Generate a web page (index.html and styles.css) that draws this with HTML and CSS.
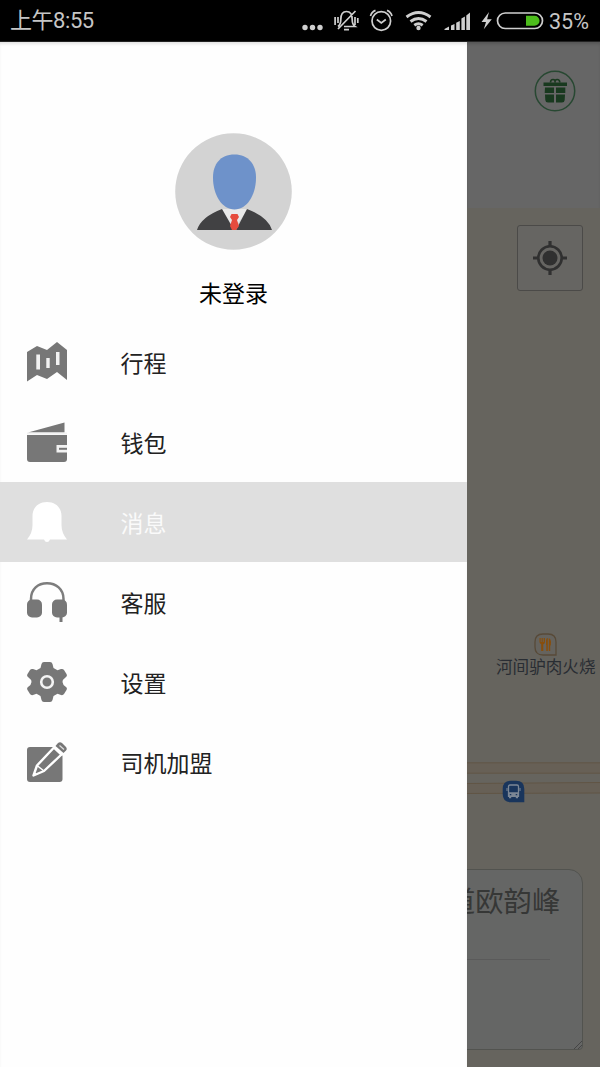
FILE: index.html
```html
<!DOCTYPE html>
<html lang="zh-CN">
<head>
<meta charset="utf-8">
<title>未登录</title>
<link rel="stylesheet" href="styles.css">
</head>
<body>
<div class="phone">
  <header class="status">
    <span class="clock">上午8:55</span>
    <svg class="status-icons" width="248" height="42" viewBox="296 0 248 42" fill="none" stroke="#cfcfcf" stroke-width="1.7">
      <g fill="#cfcfcf" stroke="none"><circle cx="305" cy="27.500" r="2.700"/><circle cx="312.500" cy="27.500" r="2.700"/><circle cx="320" cy="27.500" r="2.700"/></g>
      <path d="M338 26.500q2.800-2 2.800-7c0-5 1.700-8 5.700-8s5.700 3 5.700 8q0 5 2.800 7h-11M344 29.700h5M355.500 11L338 29M335.100 17v8M338 17v6M355 17v8M357.800 18v5"/>
      <circle cx="381.300" cy="21" r="9.300"/>
      <path d="M376.800 19.500l4.500 3.500 4.500-3.500M370.500 16q1-4 5-5.600M387 10.400q4 1.600 5 5.600"/>
      <g stroke-width="2.900"><path d="M406.500 17q12-9 24 0M410.500 21.500q8-6 16 0M414.300 25.300q4.200-3 8.400 0"/></g>
      <circle cx="418.500" cy="28" r="2.200" fill="#cfcfcf" stroke="none"/>
      <g fill="#cfcfcf" stroke="none"><path d="M444.500 30v-1l4.500-2.500V30zM451 25.500l3.500-1.500v6H451zM456.200 22.800l3.600-1.800v9h-3.600zM461.400 18.500l3.500-2v13.500h-3.500zM466.300 15.500l3.700-3v17.500h-3.700z"/><path d="M489 12l-7.500 10h4.500l-2.200 7.300 8-10h-4.700z"/></g>
      <rect x="497.500" y="13" width="45" height="15.500" rx="7.700"/>
      <path d="M526 15.700h8.500a5 5 0 0 1 0 10.100H526z" fill="#4dbd1c" stroke="none"/>
    </svg>
    <span class="percent">35%</span>
  </header>
  <div class="screen">
    <main class="drawer">
      <section class="profile">
        <svg class="avatar" width="117" height="117" viewBox="0 0 117 117">
          <circle cx="58.500" cy="58.500" r="58.300" fill="#d3d3d3"/>
          <path d="M47 76l12 20 14-20z" fill="#e9e9e9"/>
          <path d="M22 97q4-13 25-21l12 21zM97 97q-4-13-25-21L61 97z" fill="#414143"/>
          <path d="M56.500 81h6l1.500 3-2 3 2 6-3 4h-4l-2-4 2-6-2-3z" fill="#e64b3d"/>
          <path d="M59.500 21.500c14 0 21.500 10 21.500 23C81 62 72 76.500 59.500 76.500S38 62 38 44.500c0-13 7-23 21.500-23z" fill="#6e92ca"/>
        </svg>
        <h1 class="name">未登录</h1>
      </section>
      <nav class="menu">
        <a class="item"><svg class="icon" viewBox="0 0 40 40"><path d="M0 10L10 4l10 4L30 0l10 8v30l-10-8-10 7-10-4L0 39.500z"/><path class="cut" d="M9.300 12.500h3.700v15H9.300zM19.300 16h3.400v10h-3.400zM29 10h3.500v13H29z"/></svg><span>行程</span></a>
        <a class="item"><svg class="icon" viewBox="0 0 40 40"><path d="M1 10.500L37.500.5V10.500z"/><path d="M0 13h40v24q0 3-3 3H3q-3 0-3-3z"/><path class="cut" d="M29.500 23H40v7.500H29.500zM0 10.600h40v2H0z"/><path d="M32 25.800h8v2h-8z"/></svg><span>钱包</span></a>
        <a class="item active"><svg class="icon" viewBox="0 0 40 40"><path d="M20 0c9 0 14.500 6 14.500 14v9q0 8 5.500 14.500H23q-1 2.500-3 2.500t-3-2.500H0Q5.500 31 5.500 23v-9C5.500 6 11 0 20 0z"/></svg><span>消息</span></a>
        <a class="item"><svg class="icon" viewBox="0 0 40 40"><path d="M4 20v-3C4 7 11 1.300 20 1.300S36.500 7 36.500 17v3" fill="none" stroke="#7d7d7d" stroke-width="2.500"/><rect y="17.500" width="15" height="18" rx="5"/><rect x="25" y="17.500" width="15" height="18" rx="5"/><path d="M32.500 34h3v6h-3z"/></svg><span>客服</span></a>
        <a class="item"><svg class="icon" viewBox="0 0 40 40"><path d="M17 0h6q2 0 2.500 2l1 4 4 2.300 3.500-1.300q2-.5 3 1l2.500 4q1 2-.5 3Q35.500 17.500 35.500 20t3.500 5q1.500 1 .5 3L37 32q-1 1.500-3 1l-3.500-1.300-4 2.300-1 4q-.5 2-2.500 2h-6q-2 0-2.500-2l-1-4-4-2.300L6 33q-2 .5-3-1L.5 28q-1-2 .5-3 3.500-2.500 3.500-5T1 15q-1.500-1-.5-3L3 8q1-1.500 3-1l3.500 1.300 4-2.300 1-4Q15 0 17 0z"/><circle cx="20" cy="20" r="5.800" fill="none" stroke="#f4f4f4" stroke-width="2.600"/></svg><span>设置</span></a>
        <a class="item"><svg class="icon" viewBox="0 0 40 40"><rect y="5" width="35.500" height="35" rx="3"/><path d="M27 5.500L30 2l9 8-4 4" fill="#fff"/><path d="M6.500 33.500L10 23.500 27 5.500l7.500 7L17 29z" stroke="#fff" stroke-width="2.400" stroke-linejoin="round"/><path d="M10 23.500l7 5.500" stroke="#fff" stroke-width="1.500"/><path d="M28.500 4L31 1q2-1.500 4 0l4 4q1.500 2 0 3.500L36.500 11z"/><path d="M32.500 3.500l4.500 4" stroke="#ddd" stroke-width="1.300"/></svg><span>司机加盟</span></a>
      </nav>
    </main>
    <aside class="behind">
      <div class="topbar">
        <svg class="gift" width="42" height="42" viewBox="0 0 42 42">
          <circle cx="21" cy="21" r="19.700" fill="none" stroke="#284832" stroke-width="1.500"/>
          <g fill="#19391f"><path d="M9.500 12.500h23.500v3.500H9.500zM11 17.500h9v5.500h-9.300zM22 17.500h9.300v5.500H22zM11 24.500h9v8h-6q-2.500 0-2.700-2.500zM22 24.500h9l-.3 5.500q-.2 2.500-2.700 2.500h-6z"/></g>
          <path d="M16.500 12.500q0-3 2.500-3t2 3q-.3-3 2.200-3t2.600 3" fill="none" stroke="#19391f" stroke-width="1.600"/>
        </svg>
      </div>
      <div class="map">
        <button class="locate" aria-label="定位">
          <svg width="34" height="34" viewBox="0 0 34 34"><circle cx="17" cy="17" r="7.500" fill="#303030"/><circle cx="17" cy="17" r="11.700" fill="none" stroke="#303030" stroke-width="2.600"/><path d="M17 0v5M17 29v5M0 17h5M29 17h5" stroke="#303030" stroke-width="3.200"/></svg>
        </button>
        <svg class="roads" width="133" height="34" viewBox="0 0 133 34"><path d="M0 1h133v10H0zM0 21.500L133 20.500v10.500H0z" fill="#676056"/><path d="M0 .8h133M0 11.200h133M0 21.500l133-1M0 31.500l133-.5" stroke="#615545" stroke-width="1"/></svg>
        <div class="place">
          <svg width="23" height="23" viewBox="0 0 23 23"><path d="M9 1h5q8 0 8 8v13H9q-8 0-8-8V9q0-8 8-8z" fill="#65635e" stroke="#584a38" stroke-width="1.300"/><path d="M5.500 5h1.200v4h.9V5h1.200v4h.9V5h1.300v4q0 1.700-1.700 2.200V18H7.200v-6.800Q5.500 10.500 5.500 9zM12 8q0-3 1.800-3v13h-1.500v-6H12zM14.800 5q2.200 1 2.200 4t-.8 4v5h-1.400z" fill="#884e0b"/></svg>
          <span>河间驴肉火烧</span>
        </div>
        <svg class="bus" width="23" height="23" viewBox="0 0 23 23"><path d="M9 .7h5q8.300 0 8.300 8.300v13.300H9Q.7 22.300.7 14V9Q.7.7 9 .7z" fill="#19355c"/><path d="M6.500 16V6.500q0-1.500 1.500-1.500h7q1.500 0 1.500 1.500V16z" fill="none" stroke="#7c8795" stroke-width="1.300"/><path d="M6 12.200h11V17H6zM7 16h2.200v2.200H7zM13.800 16H16v2.200h-2.200zM4.500 8h1v3h-1zM17.500 8h1v3h-1z" fill="#7c8795"/><path d="M7.800 14h1.500v1.200H7.800zM13.700 14h1.500v1.200h-1.500z" fill="#19355c"/></svg>
        <div class="card">
          <div class="address">道欧韵峰</div>
          <svg class="grip" width="10" height="10" viewBox="0 0 10 10"><path d="M2 10L10 2M6 10l4-4" stroke="#454545" stroke-width="1"/></svg>
        </div>
      </div>
    </aside>
  </div>
</div>
</body>
</html>
```
FILE: styles.css
```css
* { box-sizing: border-box; }
body { margin: 0; font-family: "Noto Sans CJK SC", sans-serif; }
.phone { width: 600px; height: 1067px; display: flex; flex-direction: column; overflow: hidden; }
.status { height: 42px; flex: none; display: flex; align-items: center; padding-left: 10px; background: #000; color: #c6c6c6; border-bottom: 1px solid #222; }
.clock { width: 286px; padding-top: 1px; font-family: Roboto, "Noto Sans CJK SC", sans-serif; font-size: 22px; line-height: 42px; letter-spacing: -0.45px; white-space: nowrap; }
.clock, .percent { flex: none; }
.status-icons { flex: none; }
.percent { margin-left: 5px; padding-top: 2px; font-family: Roboto, sans-serif; font-size: 21.5px; line-height: 42px; }
.screen { flex: 1; display: flex; min-height: 0; }
/* The drawer stacks above the dimmed page so the card slides under it. */
.drawer { width: 467px; flex: none; position: relative; z-index: 1; background: #fefefe; box-shadow: inset 0 3px 3px -1px #e3e3e3; }
.profile { height: 280px; padding-top: 91px; display: flex; flex-direction: column; align-items: center; }
.avatar { flex: none; }
.name { margin: 25px 0 0; font-size: 23px; line-height: 34px; font-weight: 400; color: #000; }
.menu { display: flex; flex-direction: column; }
.item { height: 80px; display: flex; align-items: center; gap: 54px; padding-left: 26.5px; font-size: 23px; line-height: 34px; color: #222; }
.item span { padding-bottom: 1px; }
.icon { width: 40px; height: 40px; flex: none; fill: #777; }
.cut { fill: #f2f2f2; }
.active { background: #dfdfdf; color: #fafafa; }
.active .icon { fill: #fff; }
.behind { flex: 1; display: flex; flex-direction: column; background: #666563; }
.topbar { height: 166px; flex: none; padding: 28px 0 0 66.5px; background: #666; box-shadow: inset 0 3px 3px -1px #555; }
.map { position: relative; flex: 1; padding: 17px 0 0 50px; background: #66645e; }
.locate { width: 66px; height: 66px; display: flex; align-items: center; justify-content: center; padding: 0; background: #666562; border: 1.5px solid #4b4a48; border-radius: 3px; }
.roads { position: absolute; left: 0; top: 554px; }
.place { position: absolute; left: 29px; top: 425px; display: flex; flex-direction: column; align-items: center; font-size: 16.6px; line-height: 21px; color: #292d33; white-space: nowrap; }
.bus { position: absolute; left: 35px; top: 571.5px; }
.card { position: absolute; left: -40px; top: 660.5px; width: 156px; height: 181.5px; background: #656665; border: 1.5px solid #52534f; border-radius: 0 14px 4px 0; }
.address { width: 133px; height: 90px; padding: 9px 0 0 19px; font-size: 28.3px; line-height: 42px; color: #363736; white-space: nowrap; background: linear-gradient(#5a5a5a, #5a5a5a) left bottom / 122px 1px no-repeat; }
.grip { position: absolute; right: 0; bottom: 0; }
```
